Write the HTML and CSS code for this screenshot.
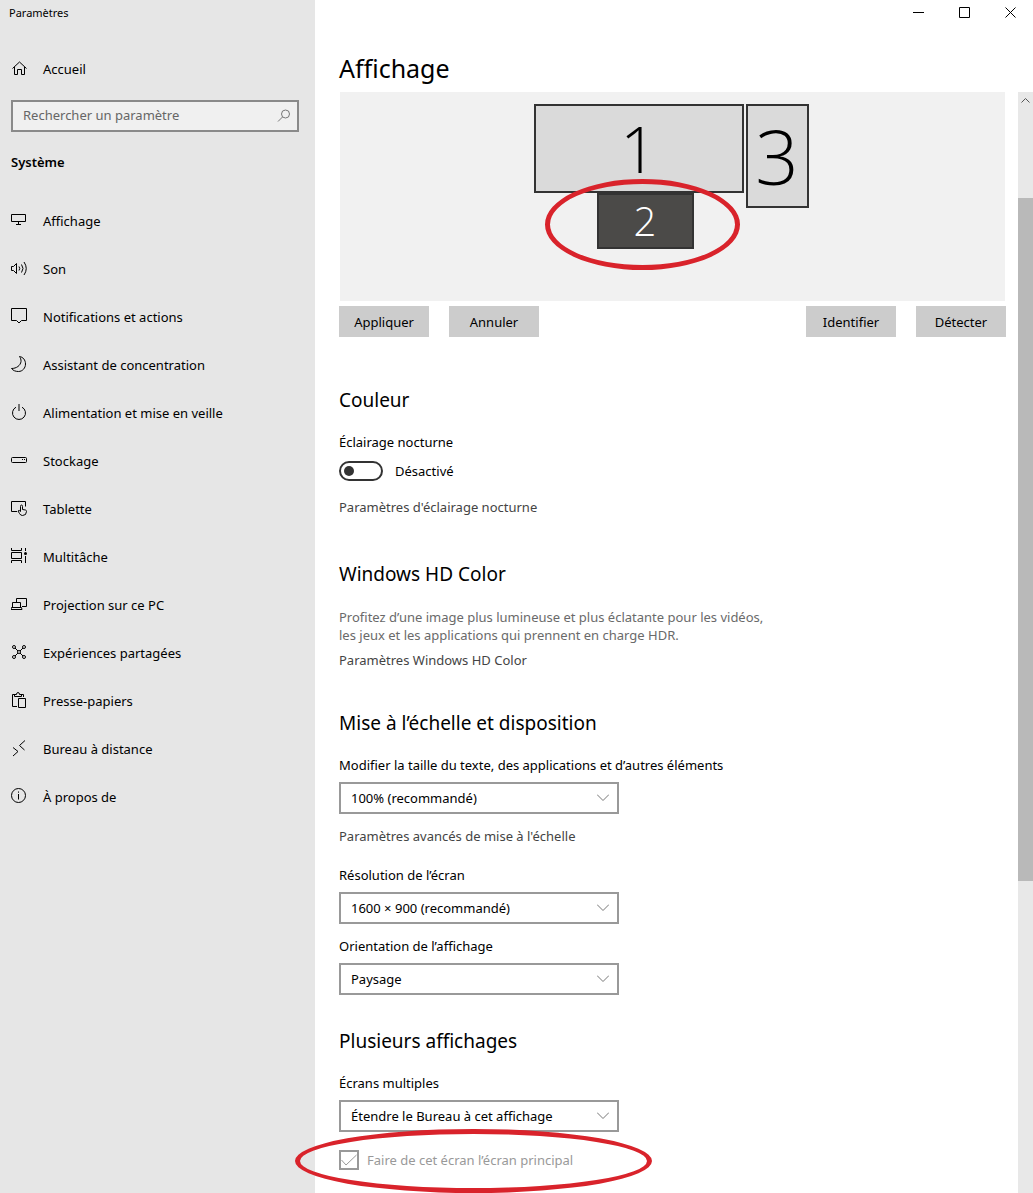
FILE: index.html
```html
<!doctype html>
<html lang="fr">
<head>
  <meta charset="utf-8">
  <title>Paramètres</title>
  <meta name="viewport" content="width=device-width, initial-scale=1">
  <link rel="stylesheet" href="styles.css">
</head>

<body>
  <aside class="sidebar">
    <div class="app-title">Paramètres</div>

    <a class="nav-item home" href="#accueil">
      <svg class="icon" viewBox="0 0 16 20"><path d="M1.500 9.500L8.500 3l7 6.500M3.500 8v7.500h3v-5h4v5h3V8"/></svg>
      Accueil
    </a>

    <div class="search">
      <input type="search" aria-label="Rechercher un paramètre" placeholder="Rechercher un paramètre">
      <svg class="search-icon" viewBox="0 0 14 14"><circle cx="8.500" cy="5" r="4"/><path d="M5.500 8L1 12.500"/></svg>
    </div>

    <h2 class="group">Système</h2>

    <nav>
      <a class="nav-item" href="#affichage">
        <svg class="icon" viewBox="0 0 16 20"><path d="M.5 3.500h14v7H.5zM7.500 10.500v2.500M5 13.500h5"/></svg>
        Affichage
      </a>
      <a class="nav-item" href="#son">
        <svg class="icon" viewBox="0 0 16 20"><path d="M.5 7.500v4h2l3 3v-10l-3 3zM8 7.500q1.500 2 0 4M10.500 5.500q3 4 0 8M13 3q4.500 6.500 0 13"/></svg>
        Son
      </a>
      <a class="nav-item" href="#notifications">
        <svg class="icon" viewBox="0 0 16 20"><path d="M.5 1.500h15v12h-5L8 16l-2.500-2.500h-5z"/></svg>
        Notifications et actions
      </a>
      <a class="nav-item" href="#concentration">
        <svg class="icon" viewBox="0 0 16 20"><path d="M8.500 1.500C12 2 14.500 5 14.500 9c0 4-3 7.500-7 7.500-3 0-5.500-1-7-3 5 0 9-3 9.500-7 .2-2-.5-3.500-1.500-5z"/></svg>
        Assistant de concentration
      </a>
      <a class="nav-item" href="#alimentation">
        <svg class="icon" viewBox="0 0 16 20"><path d="M5 4.200a6.500 6.500 0 1 0 6 0M8 1v7"/></svg>
        Alimentation et mise en veille
      </a>
      <a class="nav-item" href="#stockage">
        <svg class="icon" viewBox="0 0 16 20"><rect x=".5" y="6.500" width="15" height="5" rx="1"/><path d="M11 8.500h1M13 8.500h1"/></svg>
        Stockage
      </a>
      <a class="nav-item" href="#tablette">
        <svg class="icon" viewBox="0 0 16 20"><path d="M6 12.500H.5v-10h14v5M9.500 12.500v-5q0-1.500 1-1.500t1 1.500v3l3 .5q1 .3 1 1.500 0 4-4 4-2 0-3-2l-1.500-2.500q1-1.500 2.500.5"/></svg>
        Tablette
      </a>
      <a class="nav-item" href="#multitache">
        <svg class="icon" viewBox="0 0 16 20"><path d="M.5 1v2.500h10V1M.5 5.500h10v6H.5zM.5 16v-2.500h10V16M14.500 1v3M14.500 9v7"/><circle class="dot" cx="14.500" cy="6.500" r="1.500"/></svg>
        Multitâche
      </a>
      <a class="nav-item" href="#projection">
        <svg class="icon" viewBox="0 0 16 20"><path d="M5.500 7V3.500h10v8H11M1.500 12V7.500h8V12M.5 12.500h10l.5 2H0z"/></svg>
        Projection sur ce PC
      </a>
      <a class="nav-item" href="#partage">
        <svg class="icon" viewBox="0 0 16 20"><circle cx="3" cy="4" r="1.500"/><circle cx="13" cy="4" r="1.500"/><circle cx="3" cy="14" r="1.500"/><circle cx="13" cy="14" r="1.500"/><circle cx="8" cy="9" r="1.500"/><path d="M4 5l3 3M12 5L9 8M4 13l3-3M12 13l-3-3"/></svg>
        Expériences partagées
      </a>
      <a class="nav-item" href="#presse-papiers">
        <svg class="icon" viewBox="0 0 16 20"><path d="M6 15.500H1.500v-12H4M10 3.500h2.500V6M3.500 5.500v-2h2q0-2 1.500-2t1.500 2h2v2zM7.500 7.500h7v9h-7z"/></svg>
        Presse-papiers
      </a>
      <a class="nav-item" href="#bureau">
        <svg class="icon" viewBox="0 0 16 20"><path d="M2 8.500l5 4-5 4.500M14 1.500l-5.500 5 5 4.500"/></svg>
        Bureau à distance
      </a>
      <a class="nav-item" href="#apropos">
        <svg class="icon" viewBox="0 0 16 20"><circle cx="7.500" cy="8.500" r="7"/><path d="M7.500 7v5.500M7.500 4.500v1.200"/></svg>
        À propos de
      </a>
    </nav>
  </aside>

  <main class="main">
    <div class="window-controls">
      <button aria-label="Réduire"><svg viewBox="0 0 11 11"><path d="M0 5.500h11"/></svg></button>
      <button aria-label="Agrandir"><svg viewBox="0 0 11 11"><path d="M.5.5h10v10H.5z"/></svg></button>
      <button aria-label="Fermer"><svg viewBox="0 0 11 11"><path d="M.5.5l10 10M10.500.5l-10 10"/></svg></button>
    </div>

    <h1>Affichage</h1>

    <div class="scroll-area">
      <div class="content">
        <div class="canvas">
          <div class="screens">
            <div class="screen screen-1">1</div>
            <div class="screen screen-2">2</div>
            <div class="screen screen-3">3</div>
            <div class="mark mark-screen"></div>
          </div>
        </div>

        <div class="actions">
          <button>Appliquer</button>
          <button>Annuler</button>
          <button class="push">Identifier</button>
          <button>Détecter</button>
        </div>

        <section class="color">
          <h2>Couleur</h2>
          <label class="field-label" for="night">Éclairage nocturne</label>
          <div class="toggle-row">
            <input class="toggle" type="checkbox" role="switch" id="night">
            <span>Désactivé</span>
          </div>
          <a class="link" href="#nocturne">Paramètres d'éclairage nocturne</a>
        </section>

        <section class="hd">
          <h2>Windows HD Color</h2>
          <p>Profitez d’une image plus lumineuse et plus éclatante pour les vidéos, les jeux et les applications qui prennent en charge HDR.</p>
          <a class="link" href="#hd">Paramètres Windows HD Color</a>
        </section>

        <section class="scale">
          <h2>Mise à l’échelle et disposition</h2>
          <label class="field-label" for="size">Modifier la taille du texte, des applications et d’autres éléments</label>
          <div class="select">
            <select id="size"><option>100% (recommandé)</option></select>
            <svg viewBox="0 0 12 7"><path d="M0 .5l6 6 6-6"/></svg>
          </div>
          <a class="link" href="#echelle">Paramètres avancés de mise à l'échelle</a>

          <label class="field-label resolution" for="res">Résolution de l’écran</label>
          <div class="select">
            <select id="res"><option>1600 × 900 (recommandé)</option></select>
            <svg viewBox="0 0 12 7"><path d="M0 .5l6 6 6-6"/></svg>
          </div>

          <label class="field-label" for="orient">Orientation de l’affichage</label>
          <div class="select">
            <select id="orient"><option>Paysage</option></select>
            <svg viewBox="0 0 12 7"><path d="M0 .5l6 6 6-6"/></svg>
          </div>
        </section>

        <section class="multi">
          <h2>Plusieurs affichages</h2>
          <label class="field-label" for="multi">Écrans multiples</label>
          <div class="select">
            <select id="multi"><option>Étendre le Bureau à cet affichage</option></select>
            <svg viewBox="0 0 12 7"><path d="M0 .5l6 6 6-6"/></svg>
          </div>
          <div class="check-row">
            <input type="checkbox" id="primary" checked disabled>
            <label for="primary">Faire de cet écran l’écran principal</label>
            <svg class="tick" viewBox="0 0 20 20"><path d="M2.500 10l4.500 5L17.500 5"/></svg>
            <div class="mark mark-check"></div>
          </div>
        </section>
      </div>

      <div class="scrollbar">
        <svg viewBox="0 0 9 5"><path d="M.5 4.500l4-4 4 4"/></svg>
        <div class="thumb"></div>
      </div>
    </div>
  </main>
</body>
</html>
```
FILE: styles.css
```css
* {
  box-sizing: border-box;
}

body {
  margin: 0;
  height: 100vh;
  overflow: hidden;
  display: flex;
  background: #fff;
  color: #000;
  font-family: "Noto Sans", "Open Sans", sans-serif;
  font-size: 13px;
  line-height: 18px;
}

svg {
  fill: none;
  stroke: #000;
}

h1, h2, p {
  margin: 0;
  font-weight: 400;
}

a {
  color: inherit;
  text-decoration: none;
}

button, input, select {
  font: inherit;
  color: inherit;
}

/* sidebar */

.sidebar {
  flex: 0 0 315px;
  background: #e6e6e6;
}

.app-title {
  padding: 4px 9px 0;
  font-size: 11px;
}

.nav-item {
  display: flex;
  align-items: center;
  gap: 16px;
  height: 48px;
  padding-left: 11px;
}

.home {
  margin-top: 23px;
}

.icon {
  width: 16px;
  height: 20px;
}

.icon .dot {
  fill: #000;
  stroke: none;
}

.search {
  position: relative;
  margin: 7px 16px 0 11px;
}

.search input {
  display: block;
  width: 100%;
  height: 32px;
  padding: 0 36px 2px 10px;
  border: 2px solid #8a8a8a;
  border-radius: 0;
  background: #f0f0f0;
  appearance: none;
}

.search input::placeholder {
  color: #666;
}

.search-icon {
  position: absolute;
  right: 8px;
  top: 9px;
  width: 14px;
  height: 14px;
  stroke: #777;
}

.group {
  margin: 21px 0 26px 11px;
  font-size: 13px;
  font-weight: 600;
}

/* main pane */

.main {
  flex: 1;
  min-width: 0;
  display: flex;
  flex-direction: column;
}

.window-controls {
  display: flex;
  justify-content: flex-end;
}

.window-controls button {
  display: flex;
  align-items: center;
  justify-content: center;
  width: 46px;
  height: 25px;
  padding: 0;
  border: 0;
  background: none;
}

.window-controls svg {
  width: 11px;
  height: 11px;
}

h1 {
  margin: 25px 0 6px 24px;
  font-size: 25px;
  line-height: 36px;
}

.scroll-area {
  flex: 1;
  min-height: 0;
  display: flex;
}

.content {
  flex: 1;
  padding: 0 12px 0 24px;
}

.canvas {
  display: flex;
  justify-content: center;
  height: 209px;
  margin: 0 1px;
  padding-top: 12px;
  background: #f1f1f1;
}

.screens {
  position: relative;
  width: 278px;
}

.screen {
  position: absolute;
  display: flex;
  align-items: center;
  justify-content: center;
  border: 2px solid #333;
  background: #dadada;
  font-family: "Open Sans", sans-serif;
  font-weight: 300;
}

.screen-1 {
  left: 0;
  top: 0;
  width: 210px;
  height: 89px;
  font-size: 64px;
}

.screen-2 {
  left: 63px;
  top: 89px;
  width: 97px;
  height: 56px;
  background: #4b4a48;
  color: #fff;
  font-size: 40px;
}

.screen-3 {
  left: 212px;
  top: 0;
  width: 63px;
  height: 104px;
  font-size: 76px;
}

/* red rings drawn over the page */
.mark {
  position: absolute;
  border: 5px solid #d9232b;
  border-radius: 50%;
  pointer-events: none;
}

.mark-screen {
  left: 11px;
  top: 75px;
  width: 195px;
  height: 91px;
}

.mark-check {
  left: -44px;
  top: -21px;
  width: 357px;
  height: 64px;
}

.actions {
  display: flex;
  gap: 20px;
  margin-top: 5px;
}

.actions button {
  width: 90px;
  height: 31px;
  padding: 0;
  border: 0;
  background: #ccc;
}

.actions .push {
  margin-left: auto;
}

section h2 {
  margin-bottom: 19px;
  font-size: 19px;
  line-height: 28px;
}

.field-label,
.link {
  display: block;
}

.link {
  color: #444;
}

.color {
  margin-top: 49px;
}

.toggle-row {
  display: flex;
  align-items: center;
  gap: 12px;
  height: 20px;
  margin: 10px 0 17px;
}

.toggle {
  display: flex;
  align-items: center;
  width: 44px;
  height: 20px;
  margin: 0;
  padding-left: 3px;
  border: 2px solid #333;
  border-radius: 10px;
  appearance: none;
}

.toggle::before {
  content: "";
  width: 10px;
  height: 10px;
  border-radius: 50%;
  background: #333;
}

.hd {
  margin-top: 44px;
}

.hd h2 {
  margin-bottom: 20px;
}

.hd p {
  max-width: 440px;
  margin-bottom: 7px;
  color: #6a6a6a;
}

.scale {
  margin-top: 40px;
}

.select {
  position: relative;
  width: 280px;
  margin: 8px 0 13px;
}

.select select {
  display: block;
  width: 100%;
  height: 32px;
  padding: 0 32px 0 10px;
  border: 2px solid #999;
  border-radius: 0;
  background: #fff;
  appearance: none;
}

.select svg {
  position: absolute;
  right: 10px;
  top: 12px;
  width: 12px;
  height: 7px;
  stroke: #777;
  pointer-events: none;
}

.resolution {
  margin-top: 21px;
}

.multi {
  margin-top: 32px;
}

.check-row {
  position: relative;
  display: flex;
  align-items: center;
  gap: 8px;
  height: 20px;
  margin-top: 18px;
  color: #999;
}

.check-row input {
  width: 20px;
  height: 20px;
  margin: 0;
  border: 2px solid #999;
  appearance: none;
}

.tick {
  position: absolute;
  left: 0;
  top: 0;
  width: 20px;
  height: 20px;
  stroke: #999;
}

.scrollbar {
  flex: 0 0 15px;
  display: flex;
  flex-direction: column;
  align-items: center;
  background: #e8e8e8;
}

.scrollbar svg {
  width: 9px;
  height: 5px;
  margin-top: 6px;
  stroke: #555;
}

.thumb {
  width: 100%;
  height: 62%;
  margin-top: 95px;
  background: #b9b9b9;
}
```
